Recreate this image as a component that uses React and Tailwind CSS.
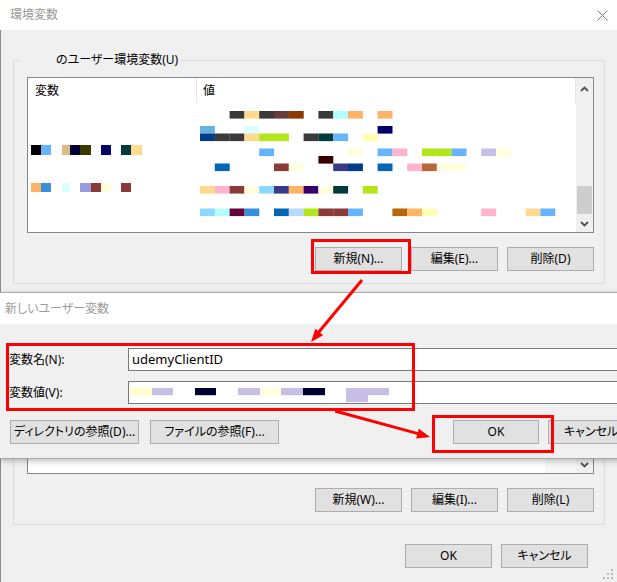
import React from "react";

const valueRows = [
  { y: 111, cells: [[2, "#3a3a3a"], [3, "#ffd98c"], [4, "#3a3a3a"], [5, "#663a3a"], [6, "#8b3a00"], [8, "#3a3a3a"], [9, "#b3ffff"], [10, "#ffb366"], [12, "#ffb366"]] },
  { y: 126, cells: [[0, "#66b3dd"], [3, "#d9ffff"], [12, "#000066"]] },
  { y: 133.5, cells: [[0, "#003a8b"], [1, "#3a3a3a"], [2, "#3a3a3a"], [3, "#ffd98c"], [4, "#b3e61a"], [5, "#b3e61a"], [7, "#3a3a3a"], [8, "#003a3a"], [9, "#66b3ff"], [11, "#ffffb3"]] },
  { y: 148.5, cells: [[4, "#66b3ff"], [10, "#ffffdd"], [12, "#66b3ff"], [13, "#ffb3cc"], [15, "#b3e61a"], [16, "#b3e61a"], [17, "#66b3ff"], [19, "#c8bfe6"], [20, "#ffffdd"]] },
  { y: 156, cells: [[8, "#3a0000"]] },
  { y: 163.5, cells: [[1, "#0066b3"], [5, "#8b3a3a"], [6, "#ffffdd"], [9, "#3a3a8b"], [10, "#003a8b"], [12, "#0066b3"], [14, "#ffb3cc"], [15, "#b8663a"], [16, "#ffffdd"], [17, "#ffffdd"]] },
  { y: 186, cells: [[0, "#ffd98c"], [1, "#ffb3cc"], [2, "#8b3a3a"], [3, "#ffffdd"], [4, "#8cd9ff"], [5, "#3a3a8b"], [6, "#ffb366"], [7, "#3a0066"], [8, "#ffffdd"], [9, "#003a3a"], [11, "#b3e61a"]] },
  { y: 208.5, cells: [[0, "#8cd9ff"], [1, "#b3ffff"], [2, "#66003a"], [3, "#3a8fdd"], [5, "#0066b3"], [6, "#b8d9ff"], [7, "#b3e61a"], [8, "#8b3a3a"], [9, "#8b3a3a"], [10, "#66b3ff"], [13, "#b8660a"], [14, "#ffb366"], [15, "#ffffb3"], [19, "#ffb3cc"], [22, "#ffd98c"], [23, "#66b3ff"]] },
];

// x, w, colour
const nameRows = [
  { y: 145, h: 10, cells: [[30, 10, "#000000"], [40, 10, "#66b3ff"], [61, 8, "#deb887"], [69, 10, "#000033"], [79, 11, "#3a3a00"], [100, 10, "#000066"], [120, 10, "#003a3a"], [130, 11, "#ffd98c"]] },
  { y: 183, h: 9, cells: [[30, 10, "#ffb366"], [40, 10, "#3a8fdd"], [61, 8, "#d9ffff"], [79, 11, "#9999dd"], [90, 10, "#8b3a3a"], [100, 10, "#ffffd9"], [120, 10, "#8b3a3a"]] },
];

const inputCells = [
  [130, 388, 22, "#ffffcc"],
  [152, 388, 21, "#c8bfe6"],
  [195, 388, 21, "#000033"],
  [238, 388, 22, "#c8bfe6"],
  [260, 388, 21, "#ffffdd"],
  [281, 388, 22, "#c8bfe6"],
  [303, 388, 22, "#000033"],
  [346, 388, 43, "#c8bfe6"],
  [346, 395, 22, "#c8bfe6"],
];

const Btn = ({ children, className = "" }) => (
  <div
    className={`h-[24px] flex items-center justify-center bg-[#e1e1e1] border border-[#adadad] text-[12px] text-black ${className}`}
  >
    {children}
  </div>
);

const Chevron = ({ up }) => (
  <svg width="9" height="6" viewBox="0 0 9 6">
    <path
      d={up ? "M1 5 L4.5 1.5 L8 5" : "M1 1 L4.5 4.5 L8 1"}
      fill="none"
      stroke="#505050"
      strokeWidth="1.8"
    />
  </svg>
);

const ListView = ({ height, children, footer }) => (
  <div
    className="ml-[13px] w-[567px] border border-[#828790] bg-white flex"
    style={{ height }}
  >
    <div className="flex-1 flex flex-col min-w-0">{children}</div>
    <div className="w-[17px] bg-[#f0f0f0] flex flex-col items-center justify-between">
      <div className="h-[22px] flex items-center">
        <Chevron up />
      </div>
      {footer}
    </div>
  </div>
);

const App = () => {
  return (
    <div className="relative w-[617px] h-[582px] overflow-hidden bg-[#f0f0f0] font-['Noto_Sans','Noto_Sans_CJK_JP',sans-serif] [font-feature-settings:'palt'] text-[12px] text-black">
      {/* 環境変数 window */}
      <div className="flex flex-col h-full">
        <div className="h-[30px] shrink-0 bg-white flex items-center justify-between pl-[10px] pr-[9px]">
          <span className="text-[#999999] text-[12px]">環境変数</span>
          <svg width="11" height="11" viewBox="0 0 11 11">
            <path d="M0.5 0.5 L10.5 10.5 M10.5 0.5 L0.5 10.5" stroke="#777" strokeWidth="1" />
          </svg>
        </div>
        <div className="flex-1 flex flex-col px-[12px] border-l border-[#8a8a8a]">
          {/* user variables */}
          <div className="relative mt-[30px] border border-[#dcdcdc] pt-[16px] pb-[12px]">
            <span className="absolute -top-[9px] left-[5px] bg-[#f0f0f0] pl-[37px] pr-[2px] leading-[16px]">
              のユーザー環境変数(U)
            </span>
            <ListView
              height={156}
              footer={
                <div className="flex flex-col items-center w-full">
                  <div className="w-[15px] h-[28px] bg-[#cdcdcd]" />
                  <div className="h-[16px] mt-[2px] flex items-center">
                    <Chevron />
                  </div>
                </div>
              }
            >
              <div className="h-[25px] shrink-0 flex">
                <div className="w-[169px] pl-[7px] flex items-center border-r border-[#e5e5e5]">変数</div>
                <div className="flex-1 pl-[6px] flex items-center border-r border-[#e5e5e5]">値</div>
              </div>
              <svg className="flex-1 w-full" viewBox="27 103 548 129" preserveAspectRatio="xMinYMin slice">
                {nameRows.map((r) =>
                  r.cells.map(([x, w, c]) => (
                    <rect key={`${r.y}-${x}`} x={x} y={r.y} width={w} height={r.h} fill={c} />
                  ))
                )}
                {valueRows.map((r) =>
                  r.cells.map(([k, c]) => (
                    <rect key={`${r.y}-${k}`} x={199 + k * 14.8} y={r.y} width={14.9} height={7.6} fill={c} />
                  ))
                )}
              </svg>
            </ListView>
            <div className="ml-[13px] w-[567px] mt-[14px] flex justify-end gap-[9px]">
              <Btn className="w-[87px]">新規(N)...</Btn>
              <Btn className="w-[87px]">編集(E)...</Btn>
              <Btn className="w-[87px]">削除(D)</Btn>
            </div>
          </div>

          {/* system variables (mostly hidden) */}
          <div className="relative mt-[18px] border border-[#dcdcdc] pt-[16px] pb-[12px]">
            <ListView
              height={155}
              footer={
                <div className="h-[16px] flex items-center">
                  <Chevron />
                </div>
              }
            >
              <div className="flex-1" />
              <div className="h-[16px] flex">
                <div className="flex-1 bg-white" />
                <div className="w-[31px] bg-[#f6f6f6]" />
              </div>
            </ListView>
            <div className="ml-[13px] w-[567px] mt-[14px] flex justify-end gap-[9px]">
              <Btn className="w-[87px]">新規(W)...</Btn>
              <Btn className="w-[87px]">編集(I)...</Btn>
              <Btn className="w-[87px]">削除(L)</Btn>
            </div>
          </div>

          <div className="mt-[19px] mr-[17px] flex justify-end gap-[9px]">
            <Btn className="w-[87px]">OK</Btn>
            <Btn className="w-[87px]">キャンセル</Btn>
          </div>
        </div>
      </div>

      {/* 新しいユーザー変数 window */}
      <div className="absolute left-0 top-[292px] w-[660px] border-t border-b border-[#a8a8a8] bg-[#f0f0f0] shadow-[0_2px_6px_rgba(0,0,0,0.25)]">
        <div className="h-[31px] bg-white flex items-center pl-[5px]">
          <span className="text-[#9a9a9a]">新しいユーザー変数</span>
        </div>
        <div className="pt-[24px] pb-[14px]">
          <div className="flex items-center">
            <div className="w-[128px] pl-[9px]">変数名(N):</div>
            <div className="flex-1 h-[23px] border border-[#7a7a7a] bg-white flex items-center pl-[3px] text-[13px]">
              udemyClientID
            </div>
          </div>
          <div className="flex items-center mt-[10px]">
            <div className="w-[128px] pl-[9px]">変数値(V):</div>
            <div className="flex-1 h-[23px] border border-[#7a7a7a] bg-white">
              <svg width="300" height="21" viewBox="129 382 300 21">
                {inputCells.map(([x, y, w, c]) => (
                  <rect key={`${x}-${y}`} x={x} y={y} width={w} height={7.2} fill={c} />
                ))}
              </svg>
            </div>
          </div>
          <div className="mt-[16px] flex pl-[10px]">
            <Btn className="w-[129px]">ディレクトリの参照(D)...</Btn>
            <Btn className="w-[129px] ml-[11px]">ファイルの参照(F)...</Btn>
            <Btn className="w-[86px] ml-[174px]">OK</Btn>
            <Btn className="w-[86px] ml-[9px]">キャンセル</Btn>
          </div>
        </div>
      </div>

      {/* annotations */}
      <svg className="absolute inset-0 pointer-events-none" width="617" height="582" viewBox="0 0 617 582">
        <g fill="none" stroke="#ff0000" strokeWidth="3">
          <rect x="312.5" y="240.5" width="97" height="32" />
          <rect x="7.5" y="344.5" width="406" height="65" />
          <rect x="433.5" y="416.5" width="119" height="35" />
          <line x1="362" y1="280" x2="318" y2="333" />
          <line x1="335" y1="411" x2="418" y2="433.6" />
        </g>
        <g fill="#ff0000">
          <polygon points="311,342 323.1,335.2 315.4,328.8" />
          <polygon points="430,437 416.2,438.4 418.8,428.8" />
        </g>
        <g fill="#b8b8b8">
          <rect x="611" y="569" width="2" height="2" />
          <rect x="607" y="573" width="2" height="2" />
          <rect x="611" y="573" width="2" height="2" />
          <rect x="603" y="577" width="2" height="2" />
          <rect x="607" y="577" width="2" height="2" />
          <rect x="611" y="577" width="2" height="2" />
        </g>
      </svg>
    </div>
  );
};

export default App;
